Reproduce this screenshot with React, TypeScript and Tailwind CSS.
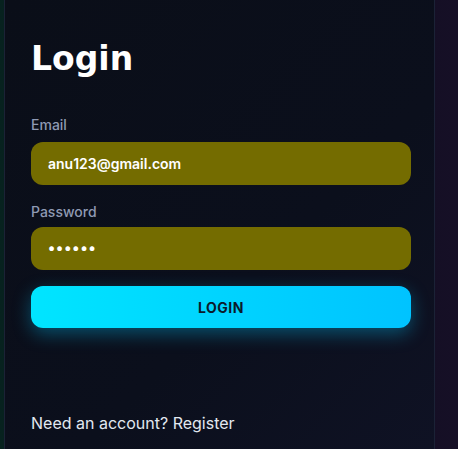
export default function App() {
  return (
    <div className="h-[449px] w-full overflow-hidden bg-[linear-gradient(90deg,#07221f_0%,#0a0e1a_30%,#160f26_100%)] flex">
      <div className="ml-[4px] w-[431px] h-full border-x border-[#1b2236] bg-[linear-gradient(135deg,#0a0e18_0%,#0b0f1c_60%,#0f1224_100%)] pl-[26px] pr-[24px] flex flex-col">
        <h1
          className="mt-[38px] text-[33px] leading-[42px] font-bold text-white"
          style={{ fontFamily: '"DejaVu Sans", sans-serif' }}
        >
          Login
        </h1>
        <form
          className="flex flex-col mt-[36px]"
          style={{ fontFamily: 'Inter, "Noto Sans", sans-serif' }}
          onSubmit={(e) => e.preventDefault()}
        >
          <label className="text-[14px] leading-[18px] font-medium text-[#8f9ab3]">Email</label>
          <div className="mt-[8px] h-[43px] w-[380px] rounded-[12px] bg-[#746c00] flex items-center px-[17px] text-[14px] font-semibold text-white">
            anu123@gmail.com
          </div>
          <label className="mt-[18px] text-[14px] leading-[18px] font-medium text-[#8f9ab3]">Password</label>
          <div className="mt-[6px] h-[43px] w-[380px] rounded-[12px] bg-[#746c00] flex items-center px-[17px] text-[15px] font-bold text-white tracking-[1px]">
            ••••••
          </div>
          <button
            type="submit"
            className="mt-[16px] h-[42px] w-[380px] rounded-[12px] bg-[linear-gradient(90deg,#00e5ff_0%,#00c3ff_100%)] shadow-[0_6px_18px_rgba(0,200,255,0.35)] text-[14px] font-bold tracking-[0.5px] text-[#0b1b2b]"
          >
            LOGIN
          </button>
          <p className="mt-[85px] text-[16px] leading-[20px] text-[#e2e8f0]">
            Need an account? Register
          </p>
        </form>
      </div>
    </div>
  )
}
